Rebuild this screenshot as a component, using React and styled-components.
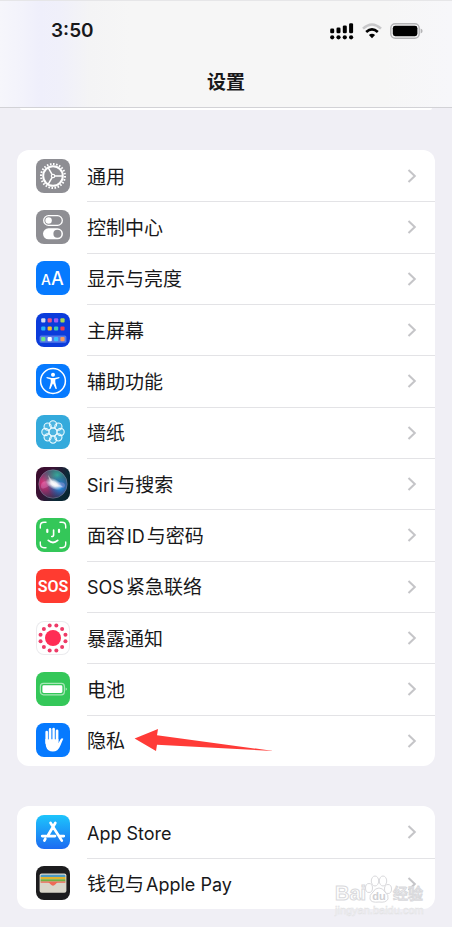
import React from "react";
import styled, { createGlobalStyle } from "styled-components";

const GlobalStyle = createGlobalStyle`
  *, *::before, *::after { box-sizing: border-box; }
  body {
    margin: 0;
    background: #f0eff5;
    color: #18181a;
    font-family: Inter, "Noto Sans CJK SC", sans-serif;
  }
`;

const Screen = styled.div`
  position: relative;
  padding-bottom: 18px;
  overflow: hidden;
`;

const TopBar = styled.header`
  height: 108px;
  border-top: 1px solid #e6e6e8;
  border-bottom: 1px solid #d2d2d6;
  background: linear-gradient(90deg, #f6f6fb 0, #f3f3fb 20px, #efeffb 40px, #f0f0fa 60px, #f4f4f5 90px, #f6f6f6 130px, #f6f6f6 85%, #f7f7fa 100%);
`;

const StatusBar = styled.div`
  display: flex;
  align-items: center;
  justify-content: space-between;
  height: 60px;
  padding: 0 29px 0 51px;
`;

const Clock = styled.time`
  font-size: 19px;
  font-weight: 600;
  line-height: 24px;
`;

const StatusIcons = styled.div`
  display: flex;
  align-items: center;
  gap: 8px;
`;

const Title = styled.h1`
  margin: 0;
  padding-top: 8px;
  text-align: center;
  font-size: 19px;
  font-weight: 700;
  line-height: 28px;
`;

const PreviousGroupEdge = styled.div`
  height: 2px;
  margin: 0 20px;
  border-radius: 0 0 8px 8px;
  background: #fff;
`;

const Groups = styled.main`
  display: grid;
  gap: 40px;
  padding: 40px 17px 0;
`;

const Group = styled.ul`
  display: grid;
  grid-auto-rows: 1fr;
  min-height: ${(p) => p.$minHeight}px;
  margin: 0;
  padding: 0;
  list-style: none;
  border-radius: 12px;
  background: #fff;
`;

const Item = styled.li`
  position: relative;
  display: grid;
`;

const RowLink = styled.a`
  display: flex;
  align-items: center;
  gap: 17px;
  padding-left: 19px;
  color: inherit;
  text-decoration: none;
`;

const IconSvg = styled.svg`
  flex: none;
  width: 34px;
  height: 34px;
  border-radius: 8px;
  background: ${(p) => p.$bg};
  box-shadow: ${(p) => (p.$outlined ? "inset 0 0 0 1px #ebebee" : "none")};
`;

const RowBody = styled.span`
  display: flex;
  align-items: center;
  justify-content: space-between;
  flex: 1;
  align-self: stretch;
  padding-right: 18px;
  border-top: 1px solid ${(p) => (p.$first ? "transparent" : "#e3e3e6")};
`;

const Label = styled.span`
  display: flex;
  align-items: baseline;
  gap: 2px;
  padding-top: 3px;
  font-size: 19px;
  line-height: 28px;
`;

const Latin = styled.span`
  font-size: 18px;
`;

const Pointer = styled.svg`
  position: absolute;
  left: 117px;
  top: 14px;
  width: 140px;
  height: 24px;
  pointer-events: none;
`;

const Watermark = styled.div`
  position: absolute;
  right: 26px;
  bottom: 8px;
  width: 92px;
  height: 48px;
  pointer-events: none;
`;

const WatermarkSvg = styled.svg`
  display: block;
  width: 92px;
  height: 48px;
`;

const polar = (cx, cy, r, deg) => {
  const a = (deg * Math.PI) / 180;
  return { cx: cx + r * Math.cos(a), cy: cy + r * Math.sin(a) };
};

function AppIcon({ bg, outlined, children }) {
  return (
    <IconSvg viewBox="0 0 34 34" $bg={bg} $outlined={outlined} aria-hidden="true">
      {children}
    </IconSvg>
  );
}

const GeneralIcon = () => (
  <AppIcon bg="#8e8e93">
    <g fill="none" stroke="#fff">
      <circle cx="17" cy="17" r="12" strokeWidth="2" pathLength="48" strokeDasharray="1 1" />
      <circle cx="17" cy="17" r="9.8" strokeWidth="2" />
      <path d="M19 17H26M16 15.3L12.3 8.8M16 18.7L12.3 25.2" strokeWidth="1.5" />
      <circle cx="17" cy="17" r="1.7" strokeWidth="1.2" />
    </g>
  </AppIcon>
);

const ControlIcon = () => (
  <AppIcon bg="#8e8e93">
    <rect x="7.7" y="5.7" width="18.6" height="9.6" rx="4.8" fill="none" stroke="#fff" strokeWidth="1.3" />
    <circle cx="12.6" cy="10.5" r="3.2" fill="#fff" />
    <rect x="7" y="18.3" width="20" height="11" rx="5.5" fill="#fff" />
    <circle cx="21.4" cy="23.8" r="4" fill="#8e8e93" />
  </AppIcon>
);

const DisplayIcon = () => (
  <AppIcon bg="#067aff">
    <g fill="#fff" fontFamily="Inter, sans-serif" fontWeight="500">
      <text x="5" y="24" fontSize="14">A</text>
      <text x="15" y="24" fontSize="18">A</text>
    </g>
  </AppIcon>
);

const homeDots = [
  ["#d5dcf0", "#e95280", "#9c5cf0", "#a7d84f"],
  ["#27b4f5", "#ffc01e", "#3bcbb0", "#f23a4e"],
  ["#6be58c", "#ffffff", "#38c0fa", "#f79a5c"],
];

const HomeIcon = () => (
  <AppIcon bg="#0b3cdb">
    <rect x="3.6" y="22.4" width="26.8" height="7.4" rx="1.5" fill="#5478e8" />
    {homeDots.map((row, r) =>
      row.map((fill, c) => (
        <rect key={fill} x={5.2 + c * 6.4} y={[5.3, 13.4, 24][r]} width="4.2" height="4.2" rx="1" fill={fill} />
      ))
    )}
  </AppIcon>
);

const AccessibilityIcon = () => (
  <AppIcon bg="#067aff">
    <circle cx="17" cy="17" r="12.4" fill="none" stroke="#fff" strokeWidth="1.5" />
    <circle cx="17" cy="10.7" r="2" fill="#fff" />
    <path d="M10.8 12.9L15.4 14H18.6L23.2 12.9Q24 13.4 23.2 14.2L19.3 15.6V18.3L20.8 24.4Q20.4 25.4 19.5 24.8L17.2 19.8H16.8L14.5 24.8Q13.6 25.4 13.2 24.4L14.7 18.3V15.6L10.8 14.2Q10 13.4 10.8 12.9Z" fill="#fff" />
  </AppIcon>
);

const WallpaperIcon = () => (
  <AppIcon bg="#34aadc">
    <g fill="#fff" fillOpacity="0.12" stroke="#eafaff" strokeWidth="1.1">
      {[0, 45, 90, 135, 180, 225, 270, 315].map((a) => (
        <circle key={a} {...polar(17, 17, 7.6, a)} r="3.6" />
      ))}
      <circle cx="17" cy="17" r="4" />
    </g>
  </AppIcon>
);

const SiriIcon = () => (
  <AppIcon bg="linear-gradient(115deg, #3b0b2c 0%, #3a1235 35%, #0b2b38 70%, #07202b 100%)">
    <defs>
      <radialGradient id="siriPink" cx="0.2" cy="0.45" r="0.6">
        <stop offset="0" stopColor="#f0347f" />
        <stop offset="1" stopColor="#c0246b" stopOpacity="0" />
      </radialGradient>
      <radialGradient id="siriTeal" cx="0.65" cy="0.2" r="0.6">
        <stop offset="0" stopColor="#35b7a0" stopOpacity="0.9" />
        <stop offset="1" stopColor="#1c8a88" stopOpacity="0" />
      </radialGradient>
      <radialGradient id="siriBlue" cx="0.75" cy="0.6" r="0.45">
        <stop offset="0" stopColor="#269cf2" />
        <stop offset="1" stopColor="#1c57b8" stopOpacity="0" />
      </radialGradient>
      <radialGradient id="siriGlow">
        <stop offset="0" stopColor="#fff" />
        <stop offset="0.4" stopColor="#fff" stopOpacity="0.85" />
        <stop offset="1" stopColor="#e8f6ff" stopOpacity="0" />
      </radialGradient>
    </defs>
    <circle cx="17" cy="17" r="14.2" fill="#3f3357" />
    <circle cx="17" cy="17" r="14.2" fill="url(#siriPink)" />
    <circle cx="17" cy="17" r="14.2" fill="url(#siriTeal)" />
    <circle cx="17" cy="17" r="14.2" fill="url(#siriBlue)" />
    <circle cx="17" cy="17" r="14.2" fill="none" stroke="#8a91a8" strokeOpacity="0.6" strokeWidth="0.8" />
    <path d="M5 19C5 13 12 13 17 17S28 23 29 18.5C29 14 22 15 17 17S5 25 5 19Z" fill="#e3a3e0" fillOpacity="0.3" />
    <ellipse cx="18" cy="17" rx="9" ry="5.2" transform="rotate(28 18 17)" fill="url(#siriGlow)" />
    <path d="M12 8Q16 13 18 17Q24 17 27 20Q21 20 17 18Q13 14 12 8Z" fill="#fff" fillOpacity="0.45" />
  </AppIcon>
);

const FaceIcon = () => (
  <AppIcon bg="#34c759">
    <g fill="none" stroke="#fff" strokeLinecap="round">
      <path d="M4.3 10V8Q4.3 4.3 8 4.3H10M24 4.3H26Q29.7 4.3 29.7 8V10M29.7 24V26Q29.7 29.7 26 29.7H24M10 29.7H8Q4.3 29.7 4.3 26V24" strokeWidth="1.4" />
      <path d="M11.3 11.8V14M23 11.8V14" strokeWidth="2.2" />
      <path d="M17.6 12V17Q17.6 18.6 15.7 18.5" strokeWidth="1.6" />
      <path d="M12.3 22.4Q17 26.6 21.7 22.4" strokeWidth="1.8" />
    </g>
  </AppIcon>
);

const SosIcon = () => (
  <AppIcon bg="#ff3b30">
    <text x="17" y="23" fontSize="16" fontWeight="600" fontFamily="Roboto, sans-serif" textAnchor="middle" fill="#fff">SOS</text>
  </AppIcon>
);

const ExposureIcon = () => (
  <AppIcon bg="#fff" outlined>
    <circle cx="17" cy="17" r="8" fill="#ff2d55" />
    {Array.from({ length: 12 }, (_, i) => (
      <circle key={i} {...polar(17, 17, 12.9, 15 + i * 30)} r="2" fill="#ee3b68" />
    ))}
  </AppIcon>
);

const BatteryIcon = () => (
  <AppIcon bg="#34c759">
    <rect x="4.4" y="11.4" width="24" height="11.4" rx="3" fill="none" stroke="#a6e7b6" strokeWidth="1.2" />
    <rect x="6.4" y="13.3" width="20" height="7.6" rx="1.4" fill="#fff" />
    <path d="M29.6 15.4Q31 16 31 17.1T29.6 18.8Z" fill="#a6e7b6" />
  </AppIcon>
);

const PrivacyIcon = () => (
  <AppIcon bg="#067aff">
    <g fill="none" stroke="#fff" strokeLinecap="round" strokeWidth="2.6">
      <path d="M10.7 9V20M14.1 6.4V18M17.6 6V18M21.1 7.8V19" />
    </g>
    <path d="M9.4 16H22.4V20.2L24.6 16.3Q25.8 14.7 27.3 15.7Q26 18.6 24.3 22.7Q22 28.6 16.8 28.6Q11.6 28.6 10 23.5Q9.4 21 9.4 16Z" fill="#fff" />
    <path d="M12.4 9V16.5M15.9 7V16.5M19.3 7.5V16.5" stroke="#55a4ff" strokeWidth="0.8" />
  </AppIcon>
);

const StoreIcon = () => (
  <AppIcon bg="linear-gradient(#1dc5fc, #1c6bf2)">
    <g fill="none" stroke="#fff" strokeLinecap="round" strokeWidth="2.7">
      <path d="M14.6 8L25.8 25.6M19.3 8L12.2 20M9.3 23.9L8.4 25.6M6.2 21.1H19M24 21.1H27.8" />
    </g>
  </AppIcon>
);

const WalletIcon = () => (
  <AppIcon bg="#1c1c1e">
    <rect x="3.6" y="7.6" width="26.8" height="19.2" rx="2" fill="#d9d6ca" />
    <path d="M4.6 11V10Q4.6 8.8 6 8.8H28Q29.4 8.8 29.4 10V11Z" fill="#4a9ac4" />
    <path d="M4.6 11H29.4V13.2H4.6Z" fill="#e2b32c" />
    <path d="M4.6 13.2H29.4V15.6H4.6Z" fill="#6fb043" />
    <path d="M4.6 15.6H29.4V16.8H21.5Q20.3 17 19.5 18.3Q17 21 14.5 18.3Q13.7 17 12.5 16.8H4.6Z" fill="#ee6a57" />
  </AppIcon>
);

const Chevron = () => (
  <svg width="10" height="16" viewBox="0 0 10 16" fill="none" stroke="#c5c5c8" strokeWidth="2" aria-hidden="true">
    <path d="M1.5 2L7.8 8L1.5 14" />
  </svg>
);

const Arrow = () => (
  <Pointer viewBox="0 0 140 24" aria-hidden="true">
    <path d="M0.6 9.5L24 0L23 6.2L139.5 22L23 15.8L22 22Z" fill="#ff3b37" />
  </Pointer>
);

const SignalIcon = () => (
  <svg width="24" height="17" viewBox="0 0 24 17" aria-hidden="true">
    {[0, 1, 2, 3].map((i) => (
      <g key={i}>
        <rect x={i * 6.3 + 0.2} y={[5.6, 4.4, 2.4, 0.3][i]} width="4" height={[4.6, 5.8, 7.8, 9.9][i]} rx="1.3" />
        <circle cx={i * 6.3 + 2.2} cy="14.3" r="2.1" />
      </g>
    ))}
  </svg>
);

const WifiIcon = () => (
  <svg width="20" height="16" viewBox="0 0 20 16" fill="none" aria-hidden="true">
    <path d="M1 5.6Q10 -2.6 19 5.6" stroke="#c8c8ca" strokeWidth="2.6" />
    <path d="M4.2 9Q10 3.9 15.8 9" stroke="#000" strokeWidth="2.7" />
    <path d="M6.9 12Q10 9.6 13.1 12L10 15.2Z" fill="#000" />
  </svg>
);

const PhoneBatteryIcon = () => (
  <svg width="33" height="16" viewBox="0 0 33 16" aria-hidden="true">
    <rect x="0.8" y="0.8" width="28.4" height="14.4" rx="4.4" fill="none" stroke="#b4b4b6" strokeWidth="1.4" />
    <rect x="2.8" y="2.8" width="24.6" height="10.4" rx="2.4" />
    <path d="M30.6 5.6Q32.6 6.4 32.6 8T30.6 10.4Z" fill="#b4b4b6" />
  </svg>
);

const groups = [
  {
    minHeight: 616,
    rows: [
      { Icon: GeneralIcon, label: ["通用"] },
      { Icon: ControlIcon, label: ["控制中心"] },
      { Icon: DisplayIcon, label: ["显示与亮度"] },
      { Icon: HomeIcon, label: ["主屏幕"] },
      { Icon: AccessibilityIcon, label: ["辅助功能"] },
      { Icon: WallpaperIcon, label: ["墙纸"] },
      { Icon: SiriIcon, label: ["Siri", "与搜索"] },
      { Icon: FaceIcon, label: ["面容", "ID", "与密码"] },
      { Icon: SosIcon, label: ["SOS", "紧急联络"] },
      { Icon: ExposureIcon, label: ["暴露通知"] },
      { Icon: BatteryIcon, label: ["电池"] },
      { Icon: PrivacyIcon, label: ["隐私"], pointed: true },
    ],
  },
  {
    minHeight: 103,
    rows: [
      { Icon: StoreIcon, label: ["App Store"] },
      { Icon: WalletIcon, label: ["钱包与", "Apple Pay"] },
    ],
  },
];

function SettingsRow({ row, first }) {
  const { Icon, label, pointed } = row;
  return (
    <Item>
      <RowLink href="#">
        <Icon />
        <RowBody $first={first}>
          <Label>
            {label.map((part) =>
              /^[A-Za-z]/.test(part) ? <Latin key={part}>{part}</Latin> : <span key={part}>{part}</span>
            )}
          </Label>
          <Chevron />
        </RowBody>
      </RowLink>
      {pointed && <Arrow />}
    </Item>
  );
}

export default function App() {
  return (
    <Screen>
      <GlobalStyle />
      <TopBar>
        <StatusBar>
          <Clock>3:50</Clock>
          <StatusIcons>
            <SignalIcon />
            <WifiIcon />
            <PhoneBatteryIcon />
          </StatusIcons>
        </StatusBar>
        <Title>设置</Title>
      </TopBar>
      <PreviousGroupEdge />
      <Groups>
        {groups.map((group) => (
          <Group key={group.minHeight} $minHeight={group.minHeight}>
            {group.rows.map((row, i) => (
              <SettingsRow key={row.label[0]} row={row} first={i === 0} />
            ))}
          </Group>
        ))}
      </Groups>
      <Watermark>
        <WatermarkSvg viewBox="0 0 92 48">
          <g fill="#fff" fillOpacity="0.75" stroke="#d9d9dc" strokeWidth="1">
            <text x="1" y="29" fontSize="20" fontWeight="700" fontFamily="Liberation Sans, sans-serif">Bai</text>
            <ellipse cx="35" cy="17" rx="3.5" ry="4.5" />
            <ellipse cx="41" cy="10" rx="3.7" ry="5" />
            <ellipse cx="49" cy="10" rx="3.7" ry="5" />
            <ellipse cx="54" cy="18" rx="3.5" ry="4.5" />
            <path d="M45 17Q49 17 51 21Q55 24 54 28Q52 32 45 31Q37 32 36 28Q35 24 39 21Q41 17 45 17Z" />
            <text x="59" y="28" fontSize="15" fontWeight="500" fontFamily="Noto Sans CJK SC, sans-serif">经验</text>
          </g>
          <text x="45" y="29" fontSize="11" fontWeight="700" fontFamily="Liberation Sans, sans-serif" textAnchor="middle" fill="#d0d0d3">du</text>
          <text x="1" y="43" fontSize="11" fontFamily="Liberation Sans, sans-serif" fill="#fafafa" stroke="#e2e2e4" strokeWidth="0.5">jingyan.baidu.com</text>
        </WatermarkSvg>
      </Watermark>
    </Screen>
  );
}
